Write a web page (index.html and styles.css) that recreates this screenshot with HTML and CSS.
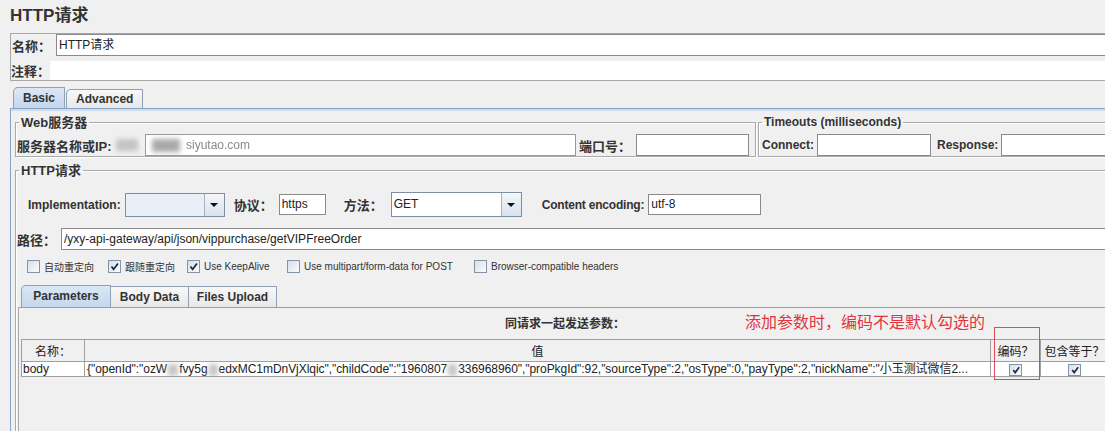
FILE: index.html
```html
<!DOCTYPE html>
<html lang="zh-CN">
<head>
<meta charset="utf-8">
<title>HTTP请求</title>
<link rel="stylesheet" href="styles.css">
</head>
<body>
<div class="page">
  <h1 class="title">HTTP请求</h1>

  <div class="namebox">
    <div class="nrow">
      <span class="lbl cjk name-lbl">名称：</span>
      <div class="field name-field">HTTP请求</div>
    </div>
    <div class="nrow r2">
      <span class="lbl cjk comment-lbl">注释：</span>
      <div class="field plain"></div>
    </div>
  </div>

  <div class="tabs">
    <div class="tab active">Basic</div>
    <div class="tab">Advanced</div>
  </div>

  <div class="tabpanel">
    <div class="toprow">
      <fieldset class="grp web">
        <legend class="cjk">Web服务器</legend>
        <div class="frow">
          <span class="lbl cjk srv-lbl">服务器名称或IP:<span class="smudge s1"></span></span>
          <div class="field srv-field"><span class="smudge s2"></span><span class="fuzzy">siyutao.com</span></div>
          <span class="lbl cjk port-lbl">端口号：</span>
          <div class="field port-field"></div>
        </div>
      </fieldset>
      <fieldset class="grp timeouts">
        <legend>Timeouts (milliseconds)</legend>
        <div class="frow trow">
          <span class="lbl">Connect:</span>
          <div class="field connect-field"></div>
          <span class="lbl resp-lbl">Response:</span>
          <div class="field resp-field"></div>
        </div>
      </fieldset>
    </div>

    <fieldset class="grp http">
      <legend class="cjk">HTTP请求</legend>
      <div class="implrow">
        <span class="lbl">Implementation:</span>
        <div class="combo impl-combo">
          <div class="val"></div>
          <div class="btn"><span class="arrow"></span></div>
        </div>
        <span class="lbl cjk proto-lbl">协议：</span>
        <div class="field small proto-field">https</div>
        <span class="lbl cjk method-lbl">方法：</span>
        <div class="combo method-combo">
          <div class="val">GET</div>
          <div class="btn"><span class="arrow"></span></div>
        </div>
        <span class="lbl enc-lbl">Content encoding:</span>
        <div class="field small enc-field">utf-8</div>
      </div>

      <div class="pathrow">
        <span class="lbl cjk path-lbl">路径：</span>
        <div class="field path-field">/yxy-api-gateway/api/json/vippurchase/getVIPFreeOrder</div>
      </div>

      <div class="checks">
        <label class="chk w1"><span class="cb"></span><span class="ctext cjk">自动重定向</span></label>
        <label class="chk w2"><span class="cb"><svg viewBox="0 0 11 11" width="11" height="11"><path d="M2.5 5.5 L4.6 8.3 L9 2.6" fill="none" stroke="#1a2640" stroke-width="1.7"/></svg></span><span class="ctext cjk">跟随重定向</span></label>
        <label class="chk w3"><span class="cb"><svg viewBox="0 0 11 11" width="11" height="11"><path d="M2.5 5.5 L4.6 8.3 L9 2.6" fill="none" stroke="#1a2640" stroke-width="1.7"/></svg></span><span class="ctext">Use KeepAlive</span></label>
        <label class="chk w4"><span class="cb"></span><span class="ctext">Use multipart/form-data for POST</span></label>
        <label class="chk"><span class="cb"></span><span class="ctext">Browser-compatible headers</span></label>
      </div>

      <div class="subtabs">
        <div class="stab active">Parameters</div>
        <div class="stab">Body Data</div>
        <div class="stab">Files Upload</div>
      </div>

      <div class="subpanel">
        <div class="paramhead cjk">同请求一起发送参数：</div>
        <span class="note cjk">添加参数时，编码不是默认勾选的</span>
        <table class="params">
          <colgroup>
            <col class="c1"><col class="c2"><col class="c3"><col class="c4">
          </colgroup>
          <thead>
            <tr><th class="cjk">名称：</th><th class="cjk">值</th><th class="cjk">编码？</th><th class="cjk">包含等于？</th></tr>
          </thead>
          <tbody>
            <tr>
              <td>body</td>
              <td class="valcell">{"openId":"ozW<span class="smudge s3"></span>fvy5g<span class="smudge s4"></span>edxMC1mDnVjXlqic","childCode":"1960807<span class="smudge s5"></span>336968960","proPkgId":92,"sourceType":2,"osType":0,"payType":2,"nickName":"小玉测试微信2...</td>
              <td class="cbcell"><span class="cb sm"><svg viewBox="0 0 11 11" width="10" height="10"><path d="M2.5 5.5 L4.6 8.3 L9 2.6" fill="none" stroke="#1a2640" stroke-width="1.8"/></svg></span></td>
              <td class="cbcell"><span class="cb sm"><svg viewBox="0 0 11 11" width="10" height="10"><path d="M2.5 5.5 L4.6 8.3 L9 2.6" fill="none" stroke="#1a2640" stroke-width="1.8"/></svg></span></td>
            </tr>
          </tbody>
        </table>
        <div class="redbox"></div>
      </div>
    </fieldset>
  </div>
</div>
</body>
</html>
```
FILE: styles.css
```css
html, body {
  margin: 0;
  overflow: hidden;
}
body {
  background: #f0f0f0;
  font-family: "Liberation Sans", "Noto Sans CJK SC", sans-serif;
  font-size: 12px;
  color: #333;
}
.cjk {
  font-family: "Liberation Sans", "Noto Sans CJK SC", sans-serif;
}
.page {
  width: 1116px;
  height: 431px;
  overflow: hidden;
}
.title {
  margin: 0;
  padding: 6px 0 0 10px;
  height: 27px;
  font-size: 17px;
  line-height: 20px;
  font-weight: bold;
  color: #333;
}

/* name box */
.namebox {
  margin-left: 10px;
  border: 1px solid #a8a8a8;
  height: 46px;
  display: flex;
  flex-direction: column;
  gap: 5px;
}
.nrow {
  display: flex;
  align-items: center;
  height: 22px;
}
.nrow.r2 {
  height: 19px;
}
.lbl {
  font-weight: bold;
  font-size: 12px;
  white-space: nowrap;
  color: #333;
}
.lbl.cjk {
  font-size: 13px;
}
.name-lbl {
  width: 44px;
  padding-left: 1px;
}
.comment-lbl {
  width: 39px;
}
.field {
  box-sizing: border-box;
  height: 22px;
  background: #fff;
  border: 1px solid #8a8a8a;
  padding: 0 2px;
  line-height: 20px;
  font-size: 12px;
  color: #222;
  white-space: nowrap;
  overflow: hidden;
}
.name-field {
  flex: 1;
}
.field.plain {
  flex: 1;
  height: 19px;
  border: none;
}

/* main tabs */
.tabs {
  display: flex;
  align-items: flex-end;
  gap: 1px;
  margin: 6px 0 0 13px;
  height: 21px;
}
.tab {
  box-sizing: border-box;
  height: 19px;
  padding: 0 9px;
  border: 1px solid #8ea1b7;
  border-bottom: none;
  border-radius: 5px 0 0 0;
  background: linear-gradient(#f8f8f8, #e8e8e8);
  font-weight: bold;
  font-size: 12px;
  line-height: 18px;
  color: #333;
}
.tab.active {
  height: 21px;
  line-height: 20px;
  background: linear-gradient(#dbe7f4, #c4d7ee);
}
.tabpanel {
  margin-left: 10px;
  border-top: 1px solid #8aa3c2;
  border-left: 1px solid #8aa3c2;
  background: linear-gradient(#cddcef 0, #cddcef 2px, #f0f0f0 2px);
  padding: 7px 4px 0 4px;
  height: 315px;
  overflow: hidden;
}

/* fieldsets */
.grp {
  margin: 0;
  padding: 0;
  min-width: 0;
  border: 1px solid #a9a9a9;
  box-shadow: inset 1px 1px 0 #fff, 1px 1px 0 #fff;
}
.grp legend {
  margin-left: 3px;
  padding: 0 2px;
  font-weight: bold;
  font-size: 12px;
  line-height: 13px;
  color: #333;
}
.grp legend.cjk {
  font-size: 13px;
}
.toprow {
  display: flex;
  gap: 2px;
}
.web {
  width: 741px;
  box-sizing: border-box;
}
.timeouts {
  flex: 1;
}
.frow {
  display: flex;
  align-items: center;
  height: 22px;
  margin-top: 5px;
  padding-left: 1px;
}
.srv-lbl {
  width: 128px;
  display: flex;
  align-items: center;
}
.smudge {
  display: inline-block;
  background: #b9b9b9;
  filter: blur(2.5px);
  vertical-align: middle;
}
.s1 {
  width: 22px;
  height: 12px;
  margin-left: 4px;
  opacity: 0.8;
}
.srv-field {
  width: 431px;
  border-color: #9a9a9a;
  display: flex;
  align-items: center;
}
.s2 {
  width: 28px;
  height: 13px;
  margin: 0 6px 0 4px;
  background: #a9a9a9;
}
.fuzzy {
  color: #8a8a8a;
  filter: blur(0.5px);
}
.port-lbl {
  margin-left: 3px;
  width: 57px;
}
.port-field {
  width: 113px;
}
.trow {
  padding-left: 3px;
}
.connect-field {
  width: 114px;
  margin-left: 3px;
}
.resp-lbl {
  margin-left: 6px;
}
.resp-field {
  flex: 1;
  margin-left: 3px;
}

/* HTTP request */
.http {
  margin-top: 7px;
  height: 330px;
}
.implrow {
  display: flex;
  align-items: center;
  height: 25px;
  margin-top: 15px;
  padding-left: 12px;
}
.combo {
  box-sizing: border-box;
  display: flex;
  height: 24px;
  border: 1px solid #7d8fa5;
  background: #fff;
}
.combo .val {
  flex: 1;
  padding-left: 2px;
  line-height: 22px;
  font-size: 12px;
  color: #222;
}
.combo .btn {
  width: 19px;
  border-left: 1px solid #a3b1c2;
  background: linear-gradient(#f3f6fa, #d9e2ec);
  display: flex;
  align-items: center;
  justify-content: center;
}
.arrow {
  width: 0;
  height: 0;
  border-left: 4px solid transparent;
  border-right: 4px solid transparent;
  border-top: 4px solid #111;
}
.impl-combo {
  width: 100px;
  margin-left: 4px;
}
.impl-combo .val {
  background: #e9eff6;
}
.proto-lbl {
  margin-left: 9px;
}
.field.small {
  height: 21px;
  line-height: 19px;
}
.proto-field {
  width: 47px;
  margin-left: 6px;
}
.method-lbl {
  margin-left: 18px;
}
.method-combo {
  width: 131px;
  height: 25px;
  margin-left: 8px;
}
.enc-lbl {
  margin-left: 20px;
  letter-spacing: -0.2px;
}
.enc-field {
  width: 113px;
  margin-left: 4px;
}
.pathrow {
  display: flex;
  align-items: center;
  height: 22px;
  margin-top: 11px;
  padding-left: 1px;
}
.path-lbl {
  width: 44px;
}
.path-field {
  flex: 1;
}

/* checkboxes */
.checks {
  display: flex;
  align-items: center;
  height: 13px;
  margin-top: 10px;
  padding-left: 11px;
}
.chk {
  display: flex;
  align-items: center;
  gap: 4px;
  font-size: 10px;
  color: #333;
  white-space: nowrap;
}
.w1 { width: 81px; }
.w2 { width: 79px; }
.w3 { width: 100px; }
.w4 { width: 187px; }
.cb {
  box-sizing: border-box;
  width: 13px;
  height: 13px;
  border: 1px solid #8494a8;
  background: linear-gradient(135deg, #d8dfe8, #fbfcfd);
  display: inline-flex;
  align-items: center;
  justify-content: center;
  flex: none;
}
.cb.sm {
  width: 13px;
  height: 12px;
}
.ctext {
  font-size: 10px;
}

/* sub tabs */
.subtabs {
  display: flex;
  align-items: flex-end;
  margin: 12px 0 0 5px;
  height: 22px;
}
.stab {
  box-sizing: border-box;
  height: 21px;
  border: 1px solid #8ea1b7;
  border-bottom: none;
  border-left: none;
  border-radius: 0;
  background: linear-gradient(#f8f8f8, #e8e8e8);
  font-weight: bold;
  font-size: 12px;
  line-height: 20px;
  text-align: center;
  color: #333;
}
.stab:nth-child(1) { width: 90px; }
.stab:nth-child(2) { width: 78px; }
.stab:nth-child(3) { width: 88px; }
.stab.active {
  height: 22px;
  line-height: 21px;
  border-left: 1px solid #8ea1b7;
  border-radius: 5px 0 0 0;
  background: linear-gradient(#dbe7f4, #c4d7ee);
}
.subpanel {
  position: relative;
  margin-left: 2px;
  border-top: 1px solid #8ea1b7;
  border-left: 1px solid #a9a9a9;
  height: 160px;
}
.paramhead {
  box-sizing: border-box;
  height: 31px;
  padding-top: 9px;
  line-height: 14px;
  text-align: center;
  font-weight: bold;
  font-size: 12px;
  color: #333;
}
.note {
  position: absolute;
  left: 726px;
  top: 5px;
  font-size: 16px;
  line-height: 20px;
  color: #e0353c;
  white-space: nowrap;
}
.redbox {
  position: absolute;
  left: 975px;
  top: 19px;
  width: 44px;
  height: 51px;
  border: 1px solid #e04a5a;
}

/* table */
.params {
  margin-left: 2px;
  width: 1087px;
  table-layout: fixed;
  border-collapse: collapse;
  font-size: 12px;
}
.c1 { width: 63px; }
.c2 { width: 906px; }
.c3 { width: 50px; }
.c4 { width: 68px; }
.params th {
  height: 21px;
  padding: 0;
  border: 1px solid #a0a0a0;
  background: #f0f0f0;
  font-weight: normal;
  font-size: 12px;
  color: #222;
  text-align: center;
}
.params td {
  height: 14px;
  padding: 0 1px;
  border: 1px solid #a0a0a0;
  background: #fff;
  line-height: 14px;
  color: #222;
  white-space: nowrap;
  overflow: hidden;
}
.params td.valcell {
  padding-left: 2px;
  letter-spacing: -0.05px;
}
.s3 {
  width: 10px;
  height: 12px;
  margin: 0 1px;
  background: #c4c4c4;
}
.s4 {
  width: 9px;
  height: 12px;
  margin: 0 1px;
  background: #c4c4c4;
}
.s5 {
  width: 9px;
  height: 12px;
  margin: 0 1px;
  background: #c4c4c4;
}
.params td.cbcell {
  text-align: center;
  vertical-align: middle;
  padding: 0;
}
.params td.cbcell .cb {
  vertical-align: middle;
}
```
